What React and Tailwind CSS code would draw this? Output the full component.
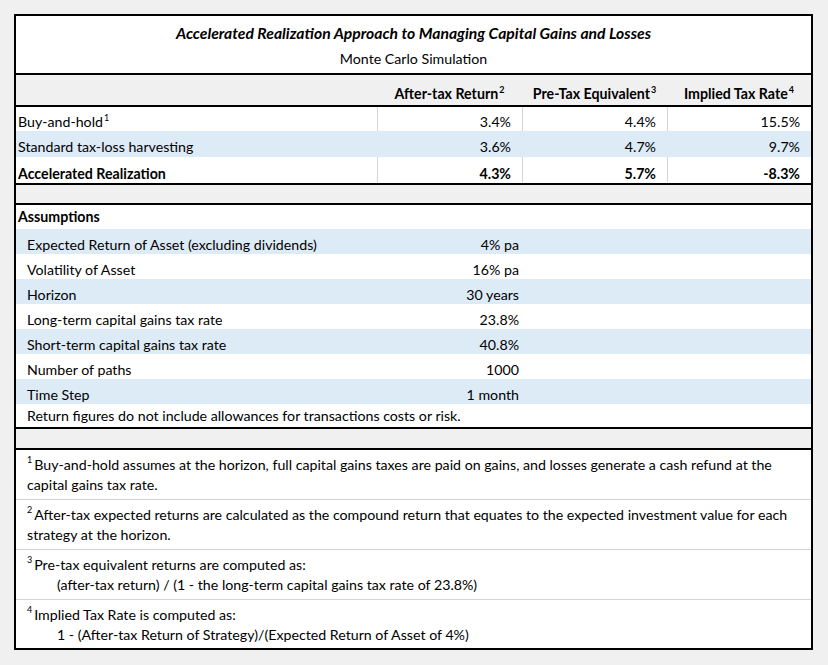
// Tableau de synthese : simulation Monte Carlo, gains et pertes en capital.
const RESULTS = [
  { name: "Buy-and-hold", sup: "1", vals: ["3.4%", "4.4%", "15.5%"], h: "h-[24px]", pb: "pb-[1px]" },
  { name: "Standard tax-loss harvesting", vals: ["3.6%", "4.7%", "9.7%"], blue: true, h: "h-[26px]", pb: "pb-[2px]" },
  { name: "Accelerated Realization", vals: ["4.3%", "5.7%", "-8.3%"], bold: true, h: "h-[26px]", pb: "pb-[1px]" },
];

const ASSUMPTIONS = [
  ["Expected Return of Asset (excluding dividends)", "4% pa"],
  ["Volatility of Asset", "16% pa"],
  ["Horizon", "30 years"],
  ["Long-term capital gains tax rate", "23.8%"],
  ["Short-term capital gains tax rate", "40.8%"],
  ["Number of paths", "1000"],
  ["Time Step", "1 month"],
];

const HEADERS = [
  ["After-tax Return", "2"],
  ["Pre-Tax Equivalent", "3"],
  ["Implied Tax Rate", "4"],
];

function Sup({ children }) {
  return <sup className="text-[9px] -top-[6px] ml-[1px]">{children}</sup>;
}

// hauteur totale bordure comprise (box-sizing: border-box)
function Note({ n, lines, indent, last }) {
  return (
    <div
      className={`pl-[11px] pt-[5px] leading-[20px] whitespace-nowrap ${last ? "h-[48px]" : "h-[50px] border-b border-[#d4d4d4]"}`}
    >
      <div>
        <sup className="text-[9px] -top-[7px] mr-[2px]">{n}</sup>
        {lines[0]}
      </div>
      <div className={indent ? "pl-[30px]" : ""}>{lines[1]}</div>
    </div>
  );
}

export default function App() {
  return (
    <div className="min-h-screen bg-[#f0f0f0] pl-[14px] pt-[14px] text-[14.2px] leading-[17px] text-black font-[family-name:Lato,sans-serif]">
      <div className="w-[799px] border-2 border-black flex flex-col">
        {/* titre */}
        <div className="bg-white pt-[8px] pb-[6px] text-center">
          <div className="text-[15.7px] leading-[19px] font-bold italic">
            Accelerated Realization Approach to Managing Capital Gains and Losses
          </div>
          <div className="mt-[7px]">Monte Carlo Simulation</div>
        </div>

        {/* en-tetes */}
        <div className="border-t-2 border-black grid grid-cols-[361px_145px_145px_144px] h-[32px] font-bold">
          <div />
          {HEADERS.map(([label, n]) => (
            <div key={label} className="flex items-end justify-center pb-[3px]">
              <span>
                {label}
                <Sup>{n}</Sup>
              </span>
            </div>
          ))}
        </div>

        {/* resultats */}
        <div className="border-t-2 border-black">
          {RESULTS.map((r) => (
            <div
              key={r.name}
              className={`grid grid-cols-[361px_145px_145px_144px] ${r.h} ${r.blue ? "bg-[#ddebf7]" : "bg-white"} ${r.bold ? "font-bold" : ""}`}
            >
              <div className={`flex items-end pl-[2px] ${r.pb}`}>
                <span>
                  {r.name}
                  {r.sup && <Sup>{r.sup}</Sup>}
                </span>
              </div>
              {r.vals.map((v, i) => (
                <div
                  key={i}
                  className={`flex items-end justify-end pr-[11px] border-l ${r.blue ? "border-[#ddebf7]" : "border-[#d4d4d4]"} ${r.pb}`}
                >
                  {v}
                </div>
              ))}
            </div>
          ))}
        </div>

        <div className="border-t-2 border-black h-[20px]" />

        {/* hypotheses */}
        <div className="border-t-2 border-black bg-white">
          <div className="h-[24px] flex items-end pl-[2px] pb-[4px] font-bold">Assumptions</div>
          {ASSUMPTIONS.map(([label, val], i) => (
            <div key={label} className={`h-[25px] flex items-end pb-[1px] ${i % 2 === 0 ? "bg-[#ddebf7]" : ""}`}>
              <div className="w-[361px] pl-[11px]">{label}</div>
              <div className="w-[145px] text-right pr-[3px]">{val}</div>
            </div>
          ))}
          <div className="h-[23px] flex items-end pb-[3px] pl-[11px]">
            Return figures do not include allowances for transactions costs or risk.
          </div>
        </div>

        <div className="border-t-2 border-black h-[21px]" />

        {/* notes */}
        <div className="border-t-2 border-black bg-white">
          <Note
            n="1"
            lines={[
              "Buy-and-hold assumes at the horizon, full capital gains taxes are paid on gains, and losses generate a cash refund at the",
              "capital gains tax rate.",
            ]}
          />
          <Note
            n="2"
            lines={[
              "After-tax expected returns are calculated as the compound return that equates to the expected investment value for each",
              "strategy at the horizon.",
            ]}
          />
          <Note
            n="3"
            indent
            lines={["Pre-tax equivalent returns are computed as:", "(after-tax return) / (1 - the long-term capital gains tax rate of 23.8%)"]}
          />
          <Note
            n="4"
            indent
            last
            lines={["Implied Tax Rate is computed as:", "1 - (After-tax Return of Strategy)/(Expected Return of Asset of 4%)"]}
          />
        </div>
      </div>
    </div>
  );
}
